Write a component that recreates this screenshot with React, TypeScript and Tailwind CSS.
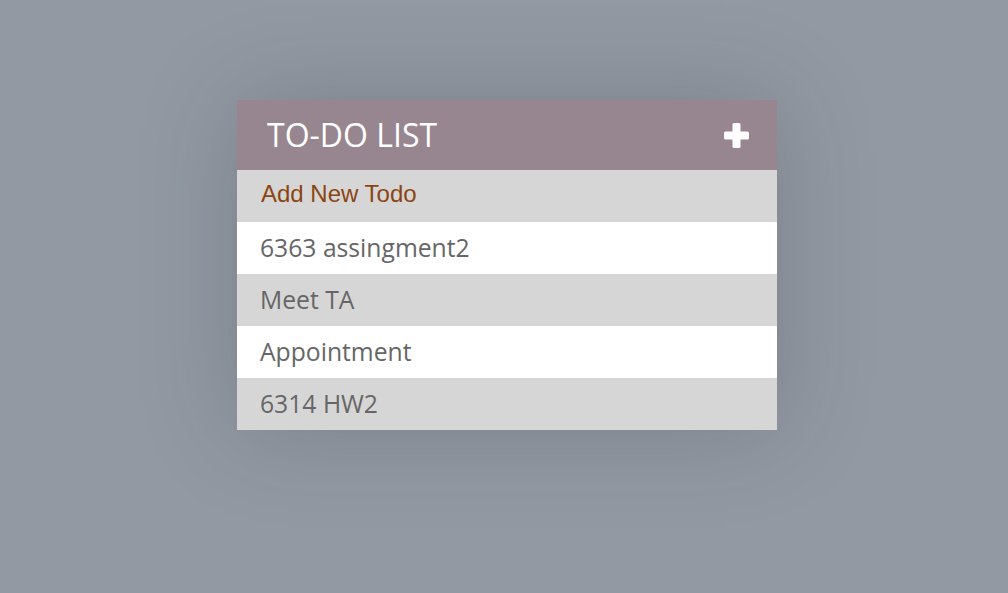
import React from 'react';

const todos = ['6363 assingment2', 'Meet TA', 'Appointment', '6314 HW2'];

function PlusIcon() {
  return (
    <svg width="25" height="25" viewBox="0 0 25 25" className="text-white">
      <rect x="0" y="8.5" width="25" height="8" rx="1.5" fill="currentColor" />
      <rect x="8.5" y="0" width="8" height="25" rx="1.5" fill="currentColor" />
    </svg>
  );
}

export default function App() {
  return (
    <div className="min-h-screen w-full bg-[#9299a3] flex justify-center pl-[6px] pt-[100px]">
      <div className="w-[540px] h-fit shadow-[0_0_90px_rgba(40,45,55,0.22)] font-['Open_Sans',sans-serif]">
        <div className="h-[70px] bg-[#978690] flex items-center justify-between pl-[30px] pr-[28px]">
          <h1 className="text-[32px] text-white leading-none">TO-DO LIST</h1>
          <PlusIcon />
        </div>
        <div className="h-[52px] bg-[#d6d6d6] pb-[5px]">
          <input
            type="text"
            placeholder="Add New Todo"
            className="w-full h-[47px] bg-transparent pl-[24px] outline-none text-[24px] font-['Liberation_Sans',Arial,sans-serif] text-[#8b4513] placeholder:text-[#8b4513]"
          />
        </div>
        <ul>
          {todos.map((todo, i) => (
            <li
              key={todo}
              className={`h-[52px] flex items-center pl-[23px] text-[24.7px] text-[#666666] ${
                i % 2 === 0 ? 'bg-white' : 'bg-[#d6d6d6]'
              }`}
            >
              {todo}
            </li>
          ))}
        </ul>
      </div>
    </div>
  );
}
